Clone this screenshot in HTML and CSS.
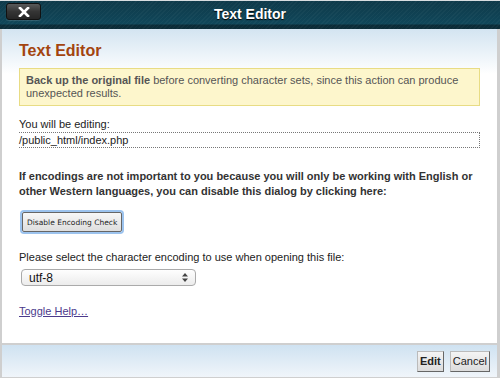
FILE: index.html
```html
<!DOCTYPE html>
<html lang="en">
<head>
    <meta charset="UTF-8">
    <title>Text Editor</title>
    <link rel="stylesheet" href="styles.css">
</head>
<body>
    <div class="dialog">
        <div class="titlebar">
            <button class="close-btn" aria-label="Close">
                <svg width="12" height="10" viewBox="0 0 12 10"><path d="M2 1 L10 9 M10 1 L2 9" stroke="#fff" stroke-width="2.6" stroke-linecap="square"/></svg>
            </button>
            <span class="title">Text Editor</span>
        </div>

        <div class="content">
            <h2 class="heading">Text Editor</h2>

            <div class="warning">
                <p><strong>Back up the original file</strong> before converting character sets, since this action can produce</p>
                <p>unexpected results.</p>
            </div>

            <p class="label">You will be editing:</p>
            <div class="filepath">/public_html/index.php</div>

            <p class="note">If encodings are not important to you because you will only be working with English or other Western languages, you can disable this dialog by clicking here:</p>

            <button class="check-btn">Disable Encoding Check</button>

            <p class="label select-label">Please select the character encoding to use when opening this file:</p>
            <div class="select">
                <span>utf-8</span>
                <svg width="6" height="9" viewBox="0 0 6 9"><path d="M0 3.5 L3 0 L6 3.5 Z M0 5.5 L3 9 L6 5.5 Z" fill="#444"/></svg>
            </div>

            <a class="help-link" href="#">Toggle Help…</a>
        </div>

        <div class="footer">
            <button class="btn btn-edit">Edit</button>
            <button class="btn">Cancel</button>
        </div>
    </div>
</body>
</html>
```

FILE: styles.css
```css
html, body {
    margin: 0;
    padding: 0;
}
body {
    font-family: "Liberation Sans", Arial, sans-serif;
    font-size: 11px;
    color: #222;
    background: #fff;
}
.dialog {
    width: 500px;
    height: 378px;
    display: flex;
    flex-direction: column;
    border-top: 1px solid #d8dde0;
    box-sizing: border-box;
}
.titlebar {
    height: 28px;
    flex: none;
    position: relative;
    display: flex;
    align-items: center;
    justify-content: center;
    background:
        repeating-linear-gradient(135deg, rgba(255,255,255,0.03) 0 1px, transparent 1px 3px),
        linear-gradient(#0f3a4a 0, #10475a 23px, #0b2c38 24px, #0b2c38 28px);
}
.title {
    color: #fff;
    font-weight: bold;
    font-size: 14px;
    margin-top: -3px;
    text-shadow: 0 1px 1px #000;
}
.close-btn {
    position: absolute;
    left: 6px;
    top: 2px;
    width: 35px;
    height: 17px;
    padding: 0;
    border: 1px solid #111;
    border-radius: 3px;
    background: linear-gradient(#5a5a5a, #353535 50%, #262626);
    box-shadow: 0 1px 1px rgba(255,255,255,0.15);
    display: flex;
    align-items: center;
    justify-content: center;
}
.content {
    flex: 1;
    padding: 13px 17px 0 17px;
    border-left: 2px solid #cfcfcf;
    border-right: 3px solid #cfcfcf;
    background: linear-gradient(#d3e4f1 0, #ffffff 45px);
}
.heading {
    margin: 0 0 8px 0;
    font-size: 16px;
    color: #a3440f;
    font-weight: bold;
    line-height: 18px;
}
.warning {
    background: #fdf6cc;
    border: 1px solid #e8dc84;
    padding: 5px 6px;
    color: #555;
    line-height: 13px;
    font-size: 11px;
}
.warning p {
    margin: 0;
    white-space: nowrap;
}
.warning strong {
    color: #555;
}
.label {
    margin: 12px 0 1px 0;
    line-height: 13px;
    font-size: 11px;
    color: #222;
}
.filepath {
    border: 1px dotted #777;
    border-left: none;
    padding: 1px 0;
    line-height: 12px;
}
.note {
    margin: 21px 0 13px 0;
    font-weight: bold;
    line-height: 15px;
    color: #333;
}
.check-btn {
    display: block;
    font-family: "DejaVu Sans", Verdana, sans-serif;
    font-size: 7.5px;
    padding: 2px 4px;
    margin-left: 3px;
    color: #222;
    background: linear-gradient(#f7f7f7, #dedede);
    border: 1px solid #666;
    border-radius: 2px;
    box-shadow: 0 0 0 2px #9cc3ee;
    height: 20px;
}
.select-label {
    margin-top: 19px;
}
.select {
    margin: 5px 0 0 2px;
    width: 175px;
    height: 17px;
    box-sizing: border-box;
    border: 1px solid #aaa;
    border-radius: 4px;
    background: linear-gradient(#fefefe, #ececec);
    display: flex;
    align-items: center;
    justify-content: space-between;
    padding: 0 7px;
    font-size: 12px;
    color: #111;
}
.help-link {
    display: inline-block;
    margin-top: 19px;
    color: #4b3a8c;
    font-size: 11px;
}
.footer {
    height: 32px;
    flex: none;
    border-top: 2px solid #cfcfcf;
    border-left: 2px solid #cfcfcf;
    border-right: 3px solid #cfcfcf;
    border-bottom: 1px solid #cfcfcf;
    background: linear-gradient(#cfe2f1, #f0f5fa);
    display: flex;
    justify-content: flex-end;
    align-items: center;
    gap: 6px;
    padding-right: 7px;
}
.btn {
    font-family: "Liberation Sans", Tahoma, sans-serif;
    font-size: 11px;
    height: 21px;
    padding: 0 2px;
    color: #222;
    background: linear-gradient(#f4f4f4, #dcdcdc);
    border: 1px solid #bbb;
    border-right-color: #666;
    border-bottom-color: #666;
}
.btn-edit {
    font-weight: bold;
}
```
